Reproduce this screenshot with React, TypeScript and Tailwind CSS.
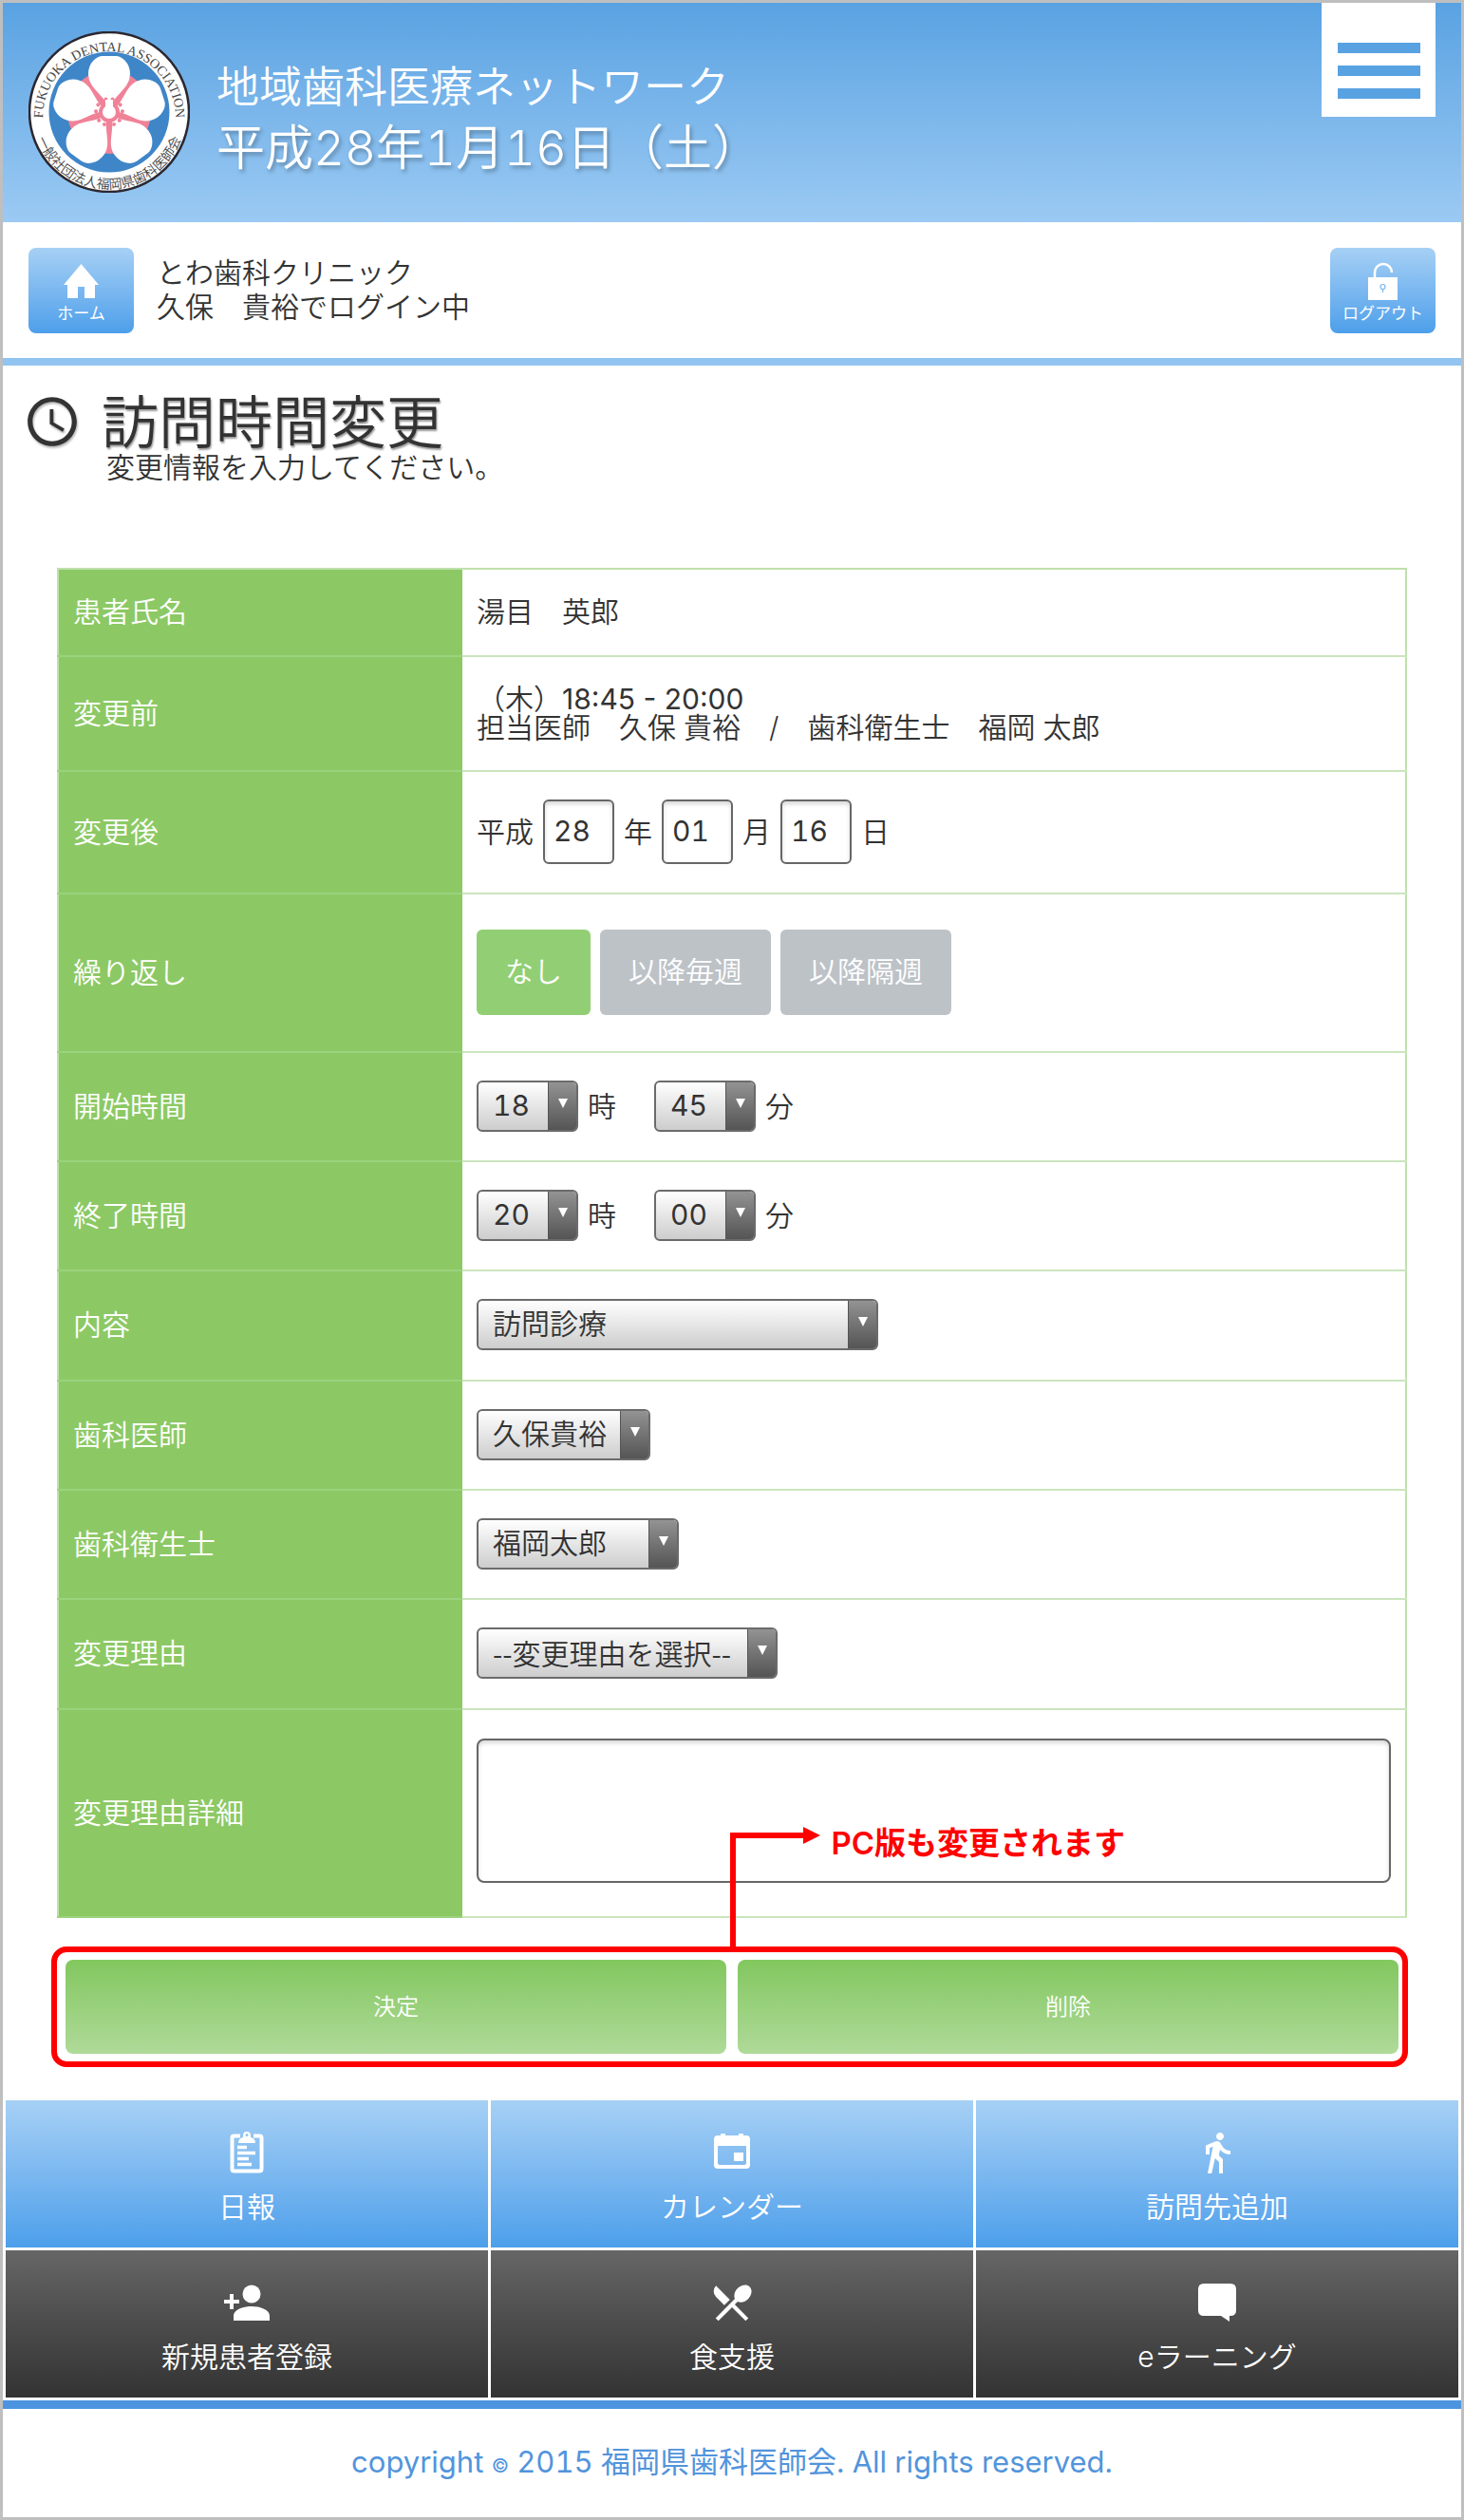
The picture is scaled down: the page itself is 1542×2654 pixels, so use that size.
import React, { useState } from 'react';
import { MdDirectionsWalk, MdLocalDining, MdSchedule } from 'react-icons/md';

interface SelectBoxProps {
  id?: string;
  label?: string;
  options: string[];
  className: string;
}

const SelectBox: React.FC<SelectBoxProps> = ({ id, label, options, className }) => (
  <div
    className={`relative h-[54px] rounded-md border-2 border-[#6b6b6b] overflow-hidden bg-linear-to-b from-white to-[#cdcdcd] ${className}`}
  >
    <select
      id={id}
      aria-label={label}
      className="block w-full h-full appearance-none bg-transparent outline-none pl-[15px] pr-8 pb-0.5 leading-[48px]"
    >
      {options.map((option) => (
        <option key={option}>{option}</option>
      ))}
    </select>
    <span className="absolute top-0 right-0 h-full w-[30px] flex items-center justify-center pb-1.5 pointer-events-none border-l border-[#555] bg-linear-to-b from-[#939393] to-[#555]">
      <svg width="10" height="10" viewBox="0 0 10 10" fill="#fff">
        <path d="M0 0h10L5 10z" />
      </svg>
    </span>
  </div>
);

const DateInput: React.FC<{ id?: string; label: string; value: string }> = ({ id, label, value }) => (
  <input
    id={id}
    type="text"
    aria-label={label}
    defaultValue={value}
    className="w-[75px] h-[68px] px-[9px] pb-0.5 font-normal rounded-md border-2 border-[#666] bg-white outline-none shadow-[inset_0_3px_4px_rgba(0,0,0,0.15)]"
  />
);

interface RowProps {
  title: string;
  htmlFor?: string;
  className: string;
  children: React.ReactNode;
}

const Row: React.FC<RowProps> = ({ title, htmlFor, className, children }) => (
  <tr className={className}>
    <th
      scope="row"
      className="w-[30%] px-[15px] pb-0.5 text-left font-[350] text-white bg-[#8cc965] border-b-2 border-[#9bd27d]"
    >
      {htmlFor ? <label htmlFor={htmlFor}>{title}</label> : title}
    </th>
    <td className="px-[15px] pb-0.5 border-b-2 border-[#cbe5bd]">{children}</td>
  </tr>
);

const PETAL = 'M85 80C81 66 64 60 64 45C64 33 73 27 78 27L92 27C97 27 106 33 106 45C106 60 89 66 85 80Z';

const Logo = () => (
  <svg className="w-[170px] h-[170px] shrink-0" viewBox="0 0 170 170" role="img" aria-label="福岡県歯科医師会">
    <defs>
      <path id="ring-top" d="M15 91A70 70 0 1 1 155 91" />
      <path id="ring-bottom" d="M4 85A81 81 0 0 0 166 85" />
    </defs>
    <circle cx="85" cy="85" r="84" fill="#fff" stroke="#2b2730" strokeWidth="2.5" />
    <circle cx="85" cy="85" r="63.500" fill="#3f86c8" />
    <circle cx="85" cy="85" r="44" fill="#f08298" />
    {[0, 72, 144, 216, 288].map((deg) => (
      <path key={deg} d={PETAL} fill="#fff" stroke="#fff" strokeWidth="2" transform={`rotate(${deg} 85 85)`} />
    ))}
    {[0, 72, 144, 216, 288].map((deg) => (
      <g key={deg} transform={`rotate(${deg + 36} 85 85)`}>
        <path d="M85 80V44" stroke="#f08298" strokeWidth="2" />
        <circle cx="80" cy="72" r="2" fill="#f08298" />
        <circle cx="90" cy="72" r="2" fill="#f08298" />
      </g>
    ))}
    <circle cx="85" cy="85" r="11" fill="#f08298" />
    <circle cx="85" cy="85" r="7" fill="#fff" />
    <path d="M81 72h8v8h-8z" fill="#fff" />
    <text fontSize="14" fill="#444" textAnchor="middle" fontFamily="'Liberation Serif', serif">
      <textPath href="#ring-top" startOffset="50%">FUKUOKA DENTAL ASSOCIATION</textPath>
    </text>
    <text fontSize="14" fill="#444" textAnchor="middle" fontFamily="'Noto Sans CJK JP', sans-serif">
      <textPath href="#ring-bottom" startOffset="50%">一般社団法人福岡県歯科医師会</textPath>
    </text>
  </svg>
);

const HomeIcon = () => (
  <svg width="37" height="36" viewBox="0 0 37 36" fill="#fff">
    <path d="M18.500 0L37 22H33V36H22V24H15V36H4V22H0Z" />
  </svg>
);

const UnlockIcon = () => (
  <svg width="32" height="40" viewBox="0 0 32 40" fill="none">
    <path d="M7 17V11A9 9 0 0 1 25 11" stroke="#fff" strokeWidth="2.500" />
    <path d="M0 16h31v24H0z" fill="#fff" />
    <circle cx="15.500" cy="26" r="2.500" stroke="#7ab6ec" strokeWidth="1.200" />
    <path d="M15.500 28v4" stroke="#7ab6ec" strokeWidth="1.200" />
  </svg>
);

const ReportIcon = () => (
  <svg width="48" height="48" viewBox="0 0 48 48" fill="none">
    <path d="M17 6.500H10.500Q8.500 6.500 8.500 8.500V41.500Q8.500 43.500 10.500 43.500H37.500Q39.500 43.500 39.500 41.500V8.500Q39.500 6.500 37.500 6.500H31" stroke="#fff" strokeWidth="4" />
    <path
      d="M20 6A4 4 0 0 1 28 6V8Q33 9 33 14H15Q15 9 20 8ZM24 4A1.500 1.500 0 0 0 24 7A1.500 1.500 0 0 0 24 4Z"
      fill="#fff"
      fillRule="evenodd"
    />
    <path d="M14 18.500H24M14 24.500H33M14 30.500H26M14 36.500H29" stroke="#fff" strokeWidth="3.500" />
  </svg>
);

const CalendarIcon = () => (
  <svg width="48" height="48" viewBox="0 0 48 48" fill="#fff">
    <path
      d="M9 6h3V5q0-1 1-1h3q1 0 1 1v1h14V5q0-1 1-1h3q1 0 1 1v1h3q4 0 4 4v27q0 4-4 4H9q-4 0-4-4V10q0-4 4-4ZM9 17v18q0 2 2 2h26q2 0 2-2V17Z"
      fillRule="evenodd"
    />
    <path d="M26 24h10v9H26z" />
  </svg>
);

const PersonAddIcon = () => (
  <svg width="48" height="48" viewBox="0 0 48 48" fill="#fff">
    <circle cx="29" cy="15" r="9.500" />
    <path d="M10 43V38C10 31 21 28 29 28S48 31 48 38V43ZM6 15h4v6h6v4h-6v6H6v-6H0v-4h6Z" />
  </svg>
);

const CommentIcon = () => (
  <svg width="48" height="48" viewBox="0 0 48 48" fill="#fff">
    <path d="M10 4H38Q44 4 44 10V32Q44 38 38 38H37V44L28 38H10Q4 38 4 32V10Q4 4 10 4Z" />
  </svg>
);

const MENU = [
  { label: '日報', icon: <ReportIcon /> },
  { label: 'カレンダー', icon: <CalendarIcon /> },
  { label: '訪問先追加', icon: <MdDirectionsWalk size={48} /> },
  { label: '新規患者登録', icon: <PersonAddIcon /> },
  { label: '食支援', icon: <MdLocalDining size={50} /> },
  { label: 'eラーニング', icon: <CommentIcon /> },
];

const REPEATS = ['なし', '以降毎週', '以降隔週'];

export default function App() {
  const [repeat, setRepeat] = useState(REPEATS[0]);

  return (
    <div className="border-3 border-[#bfbfbf] bg-white text-[#333] text-[30px] leading-[30px] font-[350] tabular-nums font-[Inter,'Noto_Sans_CJK_JP',sans-serif]">
      <header className="h-[231px] flex items-start justify-between px-[27px] bg-linear-to-b from-[#59a2e2] to-[#9bcaf3] text-white">
        <div className="flex items-start gap-7 pt-[30px]">
          <Logo />
          <div className="pt-[27px]">
            <p className="text-[45px] leading-[64px]">地域歯科医療ネットワーク</p>
            <p className="text-[51px] leading-[64px] [text-shadow:2px_3px_4px_rgba(0,0,0,0.3)]">
              平成28年1月16日（土）
            </p>
          </div>
        </div>
        <button type="button" aria-label="メニュー" className="size-[120px] bg-white flex flex-col items-center gap-[13px] pt-[42px]">
          <span className="w-[87px] h-[11px] bg-[#59a2e2]" />
          <span className="w-[87px] h-[11px] bg-[#59a2e2]" />
          <span className="w-[87px] h-[11px] bg-[#59a2e2]" />
        </button>
      </header>

      <div className="flex items-center gap-6 px-[27px] h-[151px] border-b-8 border-[#92c4f1]">
        <a
          href="#home"
          className="w-[111px] h-[90px] rounded-lg flex flex-col items-center justify-end gap-2 pb-3 text-white text-[17px] leading-[17px] font-normal bg-linear-to-b from-[#a6d0f5] to-[#4c9fea]"
        >
          <HomeIcon />
          ホーム
        </a>
        <p className="flex-1 pb-0.5 leading-9">
          とわ歯科クリニック
          <br />
          久保　貴裕でログイン中
        </p>
        <button
          type="button"
          className="w-[111px] h-[90px] rounded-lg flex flex-col items-center justify-end gap-1.5 pb-3 text-white text-[17px] leading-[17px] font-normal bg-linear-to-b from-[#a6d0f5] to-[#4c9fea]"
        >
          <UnlockIcon />
          ログアウト
        </button>
      </div>

      <main>
        <div className="flex items-start gap-[21px] pl-[21px] pt-7">
          <MdSchedule size={62} className="drop-shadow-[1px_2px_1px_rgba(0,0,0,0.3)]" />
          <div>
            <h1 className="text-[60px] leading-[64px] [text-shadow:1px_2px_2px_rgba(0,0,0,0.4)]">訪問時間変更</h1>
            <p className="pl-[5px]">変更情報を入力してください。</p>
          </div>
        </div>

        <form className="pl-[51px] pr-14 pt-[91px]" onSubmit={(e) => e.preventDefault()}>
          <div className="pl-1.5 pr-px">
            <table className="w-full table-fixed border-collapse border-2 border-[#bfe0ac]">
              <tbody>
                <Row title="患者氏名" className="h-[92px]">湯目　英郎</Row>
                <Row title="変更前" className="h-[121px]">
                  （木）<span className="font-normal proportional-nums">18:45 - 20:00</span>
                  <br />
                  担当医師　久保 貴裕　/　歯科衛生士　福岡 太郎
                </Row>
                <Row title="変更後" htmlFor="year" className="h-[129px]">
                  <div className="flex items-center gap-2.5">
                    <span>平成</span>
                    <DateInput id="year" label="年" value="28" />
                    <span>年</span>
                    <DateInput label="月" value="01" />
                    <span>月</span>
                    <DateInput label="日" value="16" />
                    <span>日</span>
                  </div>
                </Row>
                <Row title="繰り返し" className="h-[167px]">
                  <div className="flex gap-2.5">
                    {REPEATS.map((name) => (
                      <button
                        key={name}
                        type="button"
                        aria-pressed={repeat === name}
                        onClick={() => setRepeat(name)}
                        className={`h-[90px] px-[30px] pb-0.5 rounded-md text-white ${repeat === name ? 'bg-[#92cf74]' : 'bg-[#bdc2c7]'}`}
                      >
                        {name}
                      </button>
                    ))}
                  </div>
                </Row>
                <Row title="開始時間" htmlFor="start" className="h-[115px]">
                  <div className="flex items-center gap-2.5">
                    <SelectBox id="start" options={['18', '19', '20']} className="w-[107px] font-normal" />
                    <span>時</span>
                    <SelectBox label="開始 分" options={['45', '00', '15', '30']} className="w-[107px] ml-[30px] font-normal" />
                    <span>分</span>
                  </div>
                </Row>
                <Row title="終了時間" htmlFor="end" className="h-[115px]">
                  <div className="flex items-center gap-2.5">
                    <SelectBox id="end" options={['20', '21']} className="w-[107px] font-normal" />
                    <span>時</span>
                    <SelectBox label="終了 分" options={['00', '15', '30', '45']} className="w-[107px] ml-[30px] font-normal" />
                    <span>分</span>
                  </div>
                </Row>
                <Row title="内容" htmlFor="content" className="h-[116px]">
                  <SelectBox id="content" options={['訪問診療']} className="w-[423px]" />
                </Row>
                <Row title="歯科医師" htmlFor="dentist" className="h-[115px]">
                  <SelectBox id="dentist" options={['久保貴裕']} className="w-[183px]" />
                </Row>
                <Row title="歯科衛生士" htmlFor="hygienist" className="h-[115px]">
                  <SelectBox id="hygienist" options={['福岡太郎']} className="w-[213px]" />
                </Row>
                <Row title="変更理由" htmlFor="reason" className="h-[116px]">
                  <SelectBox
                    id="reason"
                    options={['--変更理由を選択--']}
                    className="w-[317px] font-['Noto_Sans_CJK_JP',sans-serif]"
                  />
                </Row>
                <Row title="変更理由詳細" htmlFor="detail" className="h-[219px]">
                  <textarea
                    id="detail"
                    className="block w-full h-[152px] mb-1 px-2.5 py-2 resize-none rounded-lg border-2 border-[#666] outline-none shadow-[inset_0_3px_4px_rgba(0,0,0,0.15)]"
                  />
                </Row>
              </tbody>
            </table>
          </div>

          <div className="relative mt-[30px] grid grid-cols-2 gap-3 border-6 border-[#f00] rounded-2xl py-2 pl-[9px] pr-1">
            <button type="submit" className="h-[99px] rounded-lg text-2xl text-white bg-linear-to-b from-[#82c75e] to-[#afda98]">
              決定
            </button>
            <button type="button" className="h-[99px] rounded-lg text-2xl text-white bg-linear-to-b from-[#82c75e] to-[#afda98]">
              削除
            </button>
            {/* callout pointing at the two buttons */}
            <div className="absolute left-1/2 bottom-full mb-1.5 flex items-start gap-3 pointer-events-none">
              <svg width="95" height="126" viewBox="0 0 95 126">
                <path d="M3 126V9H79" fill="none" stroke="#f00" strokeWidth="6" />
                <path d="M77 0L95 9L77 18Z" fill="#f00" />
              </svg>
              <p className="text-[33px] leading-[34px] font-semibold text-[#f00] whitespace-nowrap">PC版も変更されます</p>
            </div>
          </div>
        </form>
      </main>

      <nav className="mt-[35px] px-[3px] grid grid-cols-3 gap-[3px]">
        {MENU.map((item, i) => (
          <a
            key={item.label}
            href="#menu"
            className={`h-[155px] pt-[31px] flex flex-col items-center gap-[18px] text-white bg-linear-to-b ${
              i < 3 ? 'from-[#a6d0f5] to-[#4c9fea]' : 'from-[#666] to-[#333]'
            }`}
          >
            <span className="h-12 flex items-center">{item.icon}</span>
            {item.label}
          </a>
        ))}
      </nav>

      <footer className="mt-[3px] h-[123px] border-t-9 border-[#4d94e0] flex items-center justify-center text-[31px] font-normal text-[#5294dc]">
        <p>
          copyright <small className="text-xl">©</small> 2015 福岡県歯科医師会. All rights reserved.
        </p>
      </footer>
    </div>
  );
}
